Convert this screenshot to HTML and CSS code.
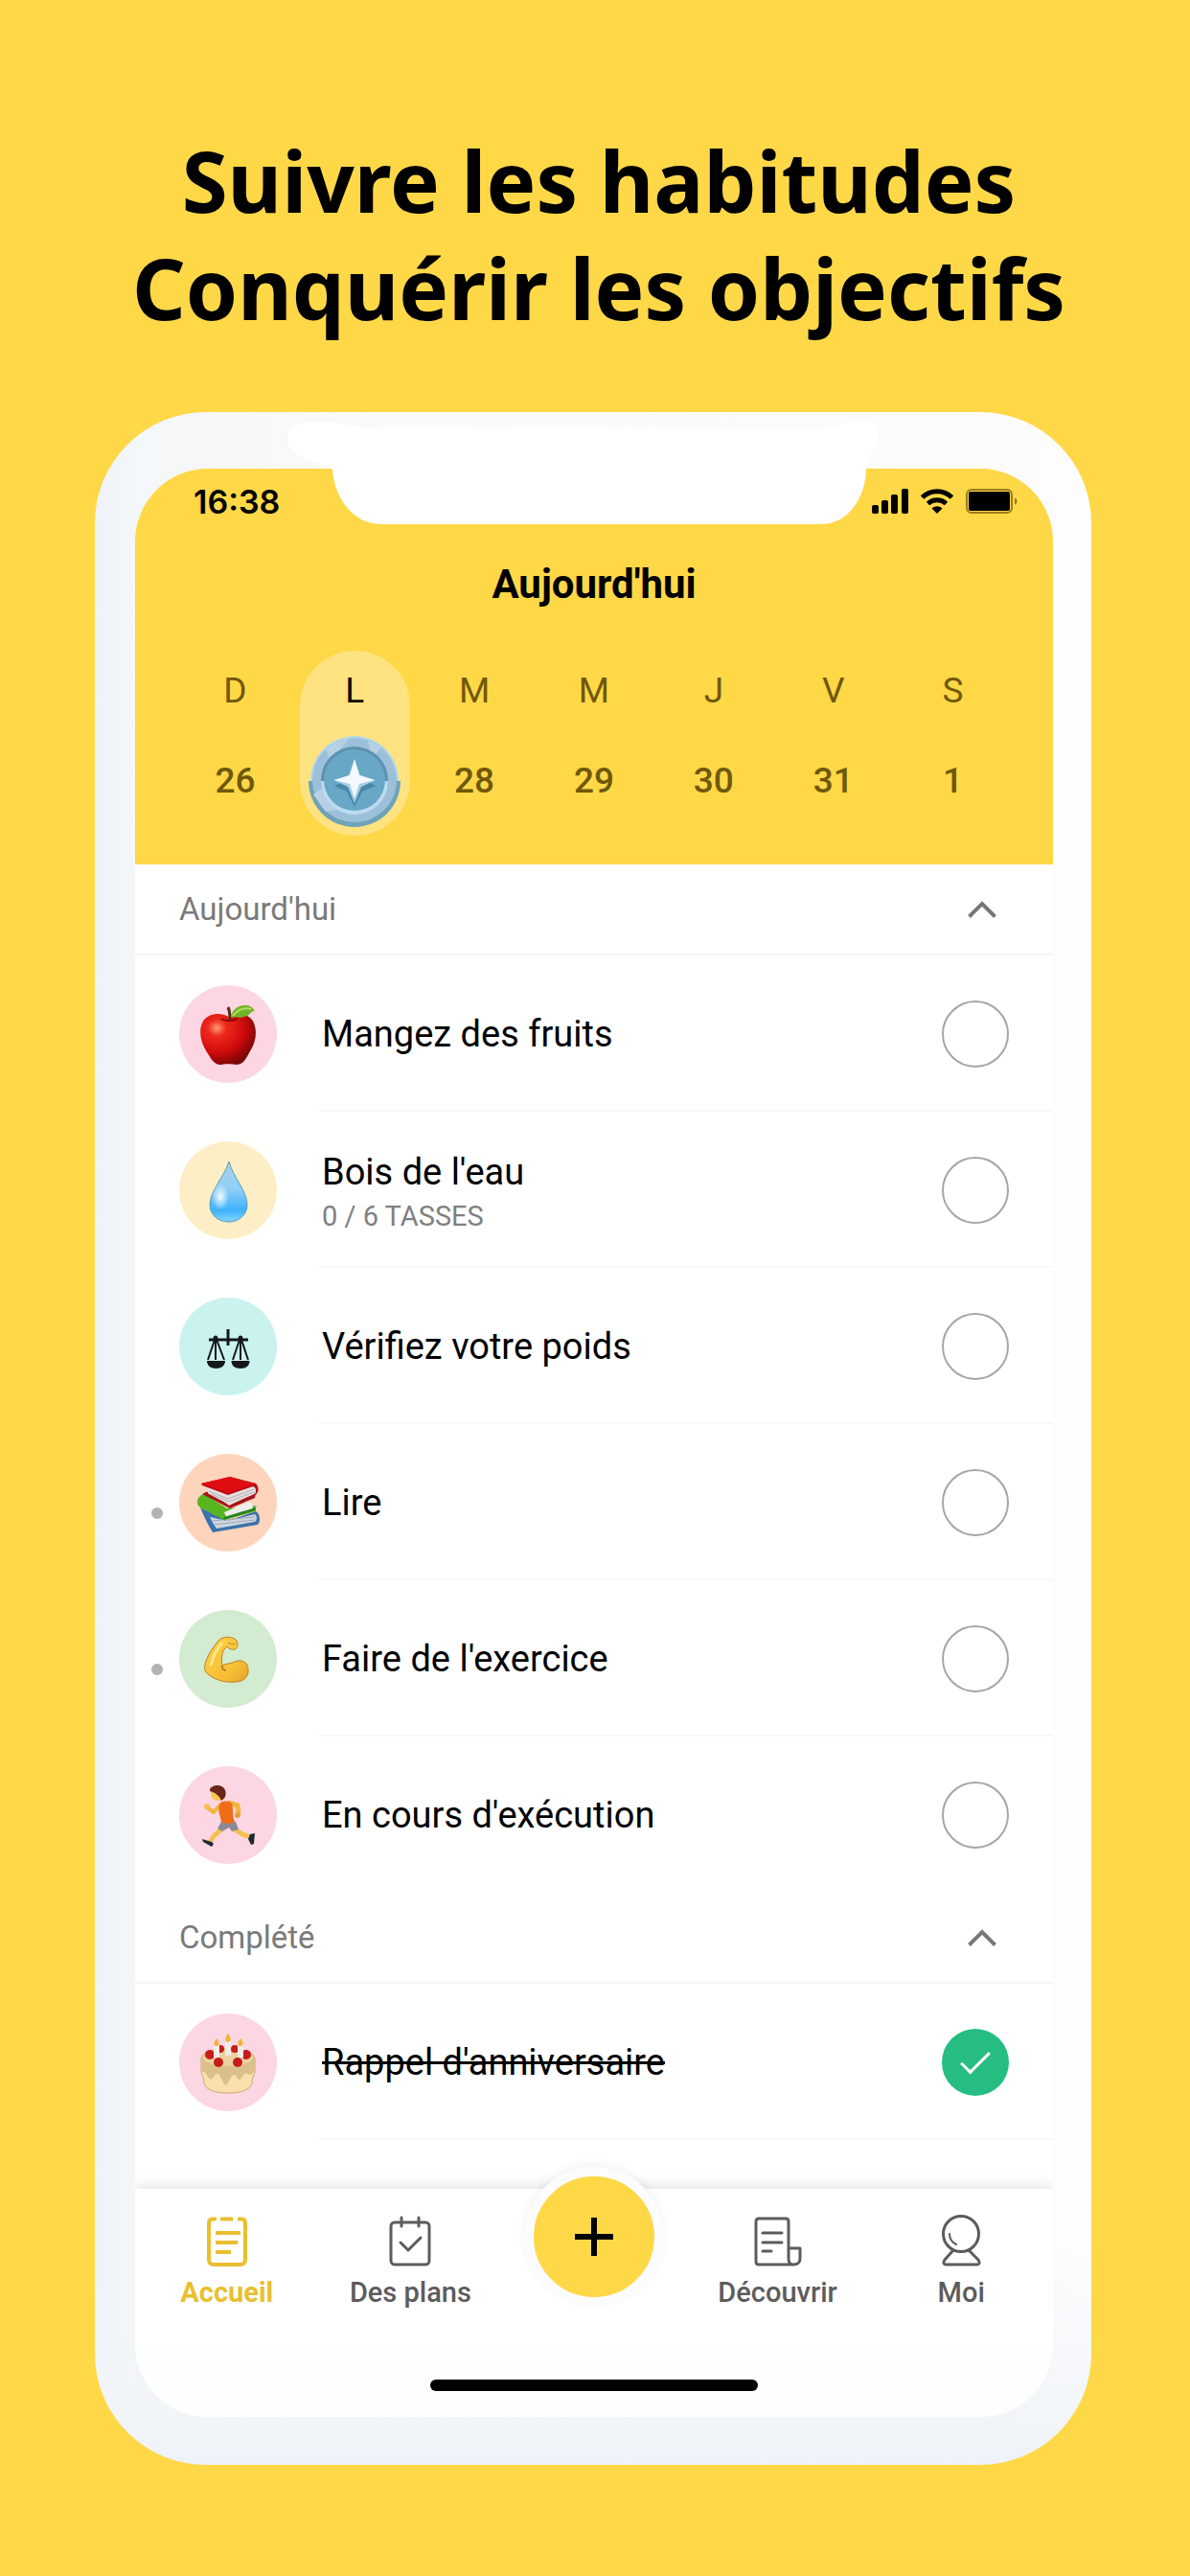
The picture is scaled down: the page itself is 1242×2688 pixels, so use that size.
FILE: index.html
```html
<!DOCTYPE html>
<html lang="fr">
<head>
    <meta charset="UTF-8">
    <meta name="viewport" content="width=device-width, initial-scale=1.0">
    <title>Suivre les habitudes</title>
    <link rel="stylesheet" href="styles.css">
</head>
<body>
    <h1>Suivre les habitudes<br>Conquérir les objectifs</h1>

    <div class="phone">
        <svg class="notch" viewBox="0 0 620 110" aria-hidden="true">
            <path d="M3 22C1 8 14 2 32 2C52 1 70 8 92 8H560C578 7 590 2 604 1C617 1 622 9 619 20C615 34 607 40 607 52C606 82 588 109 560 109H101C72 109 52 82 50 52C36 42 4 42 3 22Z" fill="#fff"/>
        </svg>

        <div class="screen">
            <header class="top">
                <div class="status">
                    <span class="time">16:38</span>
                    <div class="status-icons">
                        <svg width="38" height="26" viewBox="0 0 38 26">
                            <rect x="0" y="17" width="7" height="9" rx="2"/>
                            <rect x="10" y="12" width="7" height="14" rx="2"/>
                            <rect x="20" y="6" width="7" height="20" rx="2"/>
                            <rect x="31" y="0" width="7" height="26" rx="2"/>
                        </svg>
                        <svg width="36" height="26" viewBox="0 0 36 26">
                            <path d="M2.500 9C11 .5 25 .5 33.500 9" fill="none" stroke="#000" stroke-width="5"/>
                            <path d="M8.500 15.500C14 10.500 22 10.500 27.500 15.500" fill="none" stroke="#000" stroke-width="5"/>
                            <path d="M12.500 20.500C16 17.500 20 17.500 23.500 20.500L18 26Z"/>
                        </svg>
                        <svg width="54" height="26" viewBox="0 0 54 26">
                            <rect x="1" y="1" width="47" height="24" rx="5" fill="none" stroke="#9c7d1c" stroke-width="2"/>
                            <rect x="3" y="3" width="43" height="20" rx="2"/>
                            <path d="M51 9.500C54.500 10.500 54.500 15.500 51 16.500Z" fill="#9c7d1c"/>
                        </svg>
                    </div>
                </div>
                <h2>Aujourd'hui</h2>
                <div class="week">
                    <button class="day"><span>D</span><b>26</b></button>
                    <button class="day selected" aria-label="L 27">
                        <span>L</span>
                        <svg class="coin" viewBox="0 0 96 96">
                            <path d="M0 48A48 48 0 0 0 96 48Z" fill="#6fa3b8"/>
                            <path d="M2 48A46 47 0 0 1 94 48Z" fill="#b5d7ea"/>
                            <circle cx="48" cy="47" r="44" fill="#9dc0da"/>
                            <path d="M18 15L28 8L43 3L23 27ZM62 5L76 13L66 24ZM5 62L22 50L30 78L18 80Z" fill="#b7d1e4"/>
                            <circle cx="48" cy="47" r="35" fill="#5b92ae"/>
                            <path d="M13 48A35 35 0 0 0 83 48Z" fill="#bcdcf0"/>
                            <circle cx="48" cy="47" r="32" fill="#69a7c6"/>
                            <path d="M48 32L56 46L70 53L56 59L48 75L40 59L27 53L41 46Z" fill="#4c86a8"/>
                            <path d="M48 25L54 42L70 47L55 54L48 71L41 54L26 47L42 42Z" fill="#a9cde6"/>
                            <path d="M48 25L53 42L69 47L53 51L48 66L43 51L27 47L43 42Z" fill="#f3f9ff"/>
                        </svg>
                    </button>
                    <button class="day"><span>M</span><b>28</b></button>
                    <button class="day"><span>M</span><b>29</b></button>
                    <button class="day"><span>J</span><b>30</b></button>
                    <button class="day"><span>V</span><b>31</b></button>
                    <button class="day"><span>S</span><b>1</b></button>
                </div>
            </header>

            <main>
                <section>
                    <button class="section-title">
                        Aujourd'hui
                        <svg width="30" height="18" viewBox="0 0 30 18"><path d="M1.500 16.500L15 3L28.500 16.500"/></svg>
                    </button>
                    <ul class="habits">
                        <li class="habit">
                            <span class="icon pink">
                                <svg viewBox="0 0 102 102">
                                    <defs>
                                        <radialGradient id="apple" cx="30%" cy="28%" r="75%">
                                            <stop offset="0" stop-color="#ff9a72"/>
                                            <stop offset=".22" stop-color="#ee2a1c"/>
                                            <stop offset=".65" stop-color="#cf0a0c"/>
                                            <stop offset="1" stop-color="#7c0507"/>
                                        </radialGradient>
                                    </defs>
                                    <path d="M52 33C60 28 70 29 76 36C82 45 81 58 74 69C70 76 67 83 60 83C56 82 47 82 43 83C36 83 33 76 29 70C21 58 20 44 26 36C32 29 43 28 52 33Z" fill="url(#apple)"/>
                                    <path d="M44 35C49 38 57 38 61 34" fill="none" stroke="#8f0608" stroke-width="2"/>
                                    <path d="M51 23C53 27 53 31 53 36" fill="none" stroke="#5b2a12" stroke-width="3"/>
                                    <path d="M54 34C54 26 62 20 70 21C74 21 77 24 79 27C75 26 74 32 68 33C63 35 58 32 54 34Z" fill="#72b32b"/>
                                    <path d="M56 32C61 26 68 23 75 25" fill="none" stroke="#b4dd62" stroke-width="2"/>
                                </svg>
                            </span>
                            <label for="h1" class="name">Mangez des fruits</label>
                            <input type="checkbox" id="h1">
                        </li>
                        <li class="habit">
                            <span class="icon cream">
                                <svg viewBox="0 0 102 102">
                                    <defs>
                                        <linearGradient id="drop" x1="0" y1="0" x2="0" y2="1">
                                            <stop offset="0" stop-color="#a9cfe2"/>
                                            <stop offset=".45" stop-color="#8fd0f8"/>
                                            <stop offset=".8" stop-color="#3eb1fc"/>
                                            <stop offset="1" stop-color="#7fd6ff"/>
                                        </linearGradient>
                                        <radialGradient id="shine">
                                            <stop offset="0" stop-color="#f2faff"/>
                                            <stop offset="1" stop-color="#f2faff" stop-opacity="0"/>
                                        </radialGradient>
                                    </defs>
                                    <path d="M52 21C56 37 71 52 71 66C71 77 62 84 52 84C41 84 32 77 32 66C32 52 47 37 52 21Z" fill="url(#drop)" stroke="#5c9cba"/>
                                    <ellipse cx="43" cy="58" rx="9" ry="14" fill="url(#shine)"/>
                                </svg>
                            </span>
                            <label for="h2" class="name counted">Bois de l'eau<small>0 / 6 TASSES</small></label>
                            <input type="checkbox" id="h2">
                        </li>
                        <li class="habit">
                            <span class="icon aqua">
                                <svg viewBox="0 0 102 102" stroke="#15181a" fill="none">
                                    <path d="M51 33V50M31 44H72" stroke-width="3"/>
                                    <path d="M38 41L30 65M38 41L47 65M38 41V65M64 41L56 65M64 41L72 65M64 41V65" stroke-width="2"/>
                                    <path d="M29 66H48C48 71 44 74 38.500 74C33 74 29 71 29 66ZM54.500 66H73.500C73.500 71 70 74 64 74C58 74 54.500 71 54.500 66Z" fill="#15181a" stroke="none"/>
                                    <circle cx="38" cy="42" r="2" fill="#15181a"/>
                                    <circle cx="64" cy="42" r="2" fill="#15181a"/>
                                </svg>
                            </span>
                            <label for="h3" class="name">Vérifiez votre poids</label>
                            <input type="checkbox" id="h3">
                        </li>
                        <li class="habit dotted">
                            <span class="icon peach">
                                <svg viewBox="0 0 102 102">
                                    <path d="M22 56L50 70L80 60C85 63 85 71 82 74L35 82C30 74 26 66 22 56Z" fill="#3b72ad"/>
                                    <path d="M32 66L50 70L79 63C82 66 81 69 79 71L39 78C36 74 34 70 32 66Z" fill="#cdd5de"/>
                                    <path d="M34 70L79 66M37 74L79 69" stroke="#9fabb8" fill="none"/>
                                    <path d="M19 50C19 46 22 43 26 42L50 57L81 54L78 57L80 60L47 69L22 56C19 54 19 52 19 50Z" fill="#57b51f"/>
                                    <path d="M47 61L73 50C78 52 77 56 76 58L49 66Z" fill="#eceeed"/>
                                    <path d="M46 69L80 59V56L47 66Z" fill="#26841c"/>
                                    <path d="M24 42L32 38L52 54L80 41L79 46L53 57Z" fill="#a5131c"/>
                                    <path d="M29 35L51 42L79 33C82 36 81 40 78 42L52 53L31 42C29 40 28 37 29 35Z" fill="#e4dfe0"/>
                                    <path d="M31 39L51 47L78 37M33 42L52 50L78 40" fill="none" stroke="#b7adb0"/>
                                    <path d="M23 31L53 24L80 31C84 35 83 41 79 43C81 38 80 35 77 34L51 43L24 33Z" fill="#b90b16"/>
                                    <path d="M23 31L53 24L80 31L51 41Z" fill="#df0d12"/>
                                </svg>
                            </span>
                            <label for="h4" class="name">Lire</label>
                            <input type="checkbox" id="h4">
                        </li>
                        <li class="habit dotted">
                            <span class="icon green">
                                <svg viewBox="0 0 102 102">
                                    <defs>
                                        <linearGradient id="arm" x1="0" y1="0" x2="1" y2="1">
                                            <stop offset="0" stop-color="#ffd24a"/>
                                            <stop offset=".7" stop-color="#f7bd35"/>
                                            <stop offset="1" stop-color="#e0a02d"/>
                                        </linearGradient>
                                    </defs>
                                    <path d="M41 32C45 27 56 27 60 32C62 36 61 40 58 41C54 42 51 40 50 38L47 41C44 46 44 52 45 58C50 55 55 56 58 54C64 51 72 54 72 62C73 70 67 75 58 75C47 76 38 73 30 67C26 64 26 59 28 53C31 45 36 38 41 32Z" fill="url(#arm)" stroke="#b98220" stroke-width="1"/>
                                    <path d="M45 58C44 61 46 63 49 63" fill="none" stroke="#b98220" stroke-width="2"/>
                                    <path d="M33 58C35 49 39 41 45 34" fill="none" stroke="#ffe684" stroke-width="3"/>
                                    <path d="M51 34C54 36 57 36 59 35" fill="none" stroke="#b98220"/>
                                </svg>
                            </span>
                            <label for="h5" class="name">Faire de l'exercice</label>
                            <input type="checkbox" id="h5">
                        </li>
                        <li class="habit">
                            <span class="icon pink">
                                <svg viewBox="0 0 102 102">
                                    <path d="M43 40L36 48L29 43" fill="none" stroke="#f2b63e" stroke-width="4" stroke-linejoin="round"/>
                                    <circle cx="29" cy="42" r="3" fill="#f6c04a"/>
                                    <path d="M51 38L61 41L62 50" fill="none" stroke="#f2b63e" stroke-width="5" stroke-linejoin="round"/>
                                    <circle cx="61" cy="51" r="3" fill="#e3a235"/>
                                    <path d="M45 65L36 73L32 80" fill="none" stroke="#f5c04d" stroke-width="5"/>
                                    <path d="M57 65L66 71L75 74" fill="none" stroke="#f5c04d" stroke-width="5"/>
                                    <path d="M24 76L34 79L36 81L34 84L25 79ZM74 71L79 70L78 81L75 82L72 76Z" fill="#202a35"/>
                                    <path d="M44 58H59L62 66L55 68L52 64L45 68L40 65Z" fill="#8b8a93"/>
                                    <path d="M43 38C47 36 53 36 55 39C57 45 55 51 58 58C53 61 48 60 44 58C43 51 39 45 43 38Z" fill="#ef6d17"/>
                                    <circle cx="40" cy="29" r="7" fill="#f8c650"/>
                                    <path d="M32 24C35 18 46 19 48 25C50 31 47 34 44 36C42 31 39 28 32 26Z" fill="#6b2519"/>
                                </svg>
                            </span>
                            <label for="h6" class="name">En cours d'exécution</label>
                            <input type="checkbox" id="h6">
                        </li>
                    </ul>
                </section>

                <section>
                    <button class="section-title">
                        Complété
                        <svg width="30" height="18" viewBox="0 0 30 18"><path d="M1.500 16.500L15 3L28.500 16.500"/></svg>
                    </button>
                    <ul class="habits">
                        <li class="habit done">
                            <span class="icon pink">
                                <svg viewBox="0 0 102 102">
                                    <path d="M23 46V61C24 65 26 67 26 73C28 80 38 83 51 83C64 83 74 80 76 73C76 67 78 65 79 61V46Z" fill="#f9dfae" stroke="#cda873"/>
                                    <path d="M23 46C24 39 37 36 51 36C65 36 78 39 79 46V58C77 64 74 65 71 63C68 61 66 66 63 70C60 67 58 62 55 65C52 70 50 76 48 75C44 70 43 63 40 63C37 63 36 68 33 69C29 67 28 61 25 61C23 59 23 52 23 46Z" fill="#dcc08c"/>
                                    <ellipse cx="51" cy="46" rx="26" ry="9" fill="#e9d1a1"/>
                                    <g fill="#c91a1c">
                                        <circle cx="43" cy="37" r="4"/>
                                        <circle cx="58" cy="37" r="4"/>
                                        <circle cx="32" cy="43" r="5"/>
                                        <circle cx="70" cy="43" r="5"/>
                                        <circle cx="41" cy="51" r="5"/>
                                        <circle cx="61" cy="51" r="5"/>
                                    </g>
                                    <path d="M39 33V46M51 29V44M64 33V46" stroke="#f1ece8" stroke-width="6"/>
                                    <path d="M39 26C43 31 42 34 39 34C36 34 35 31 39 26ZM51 21C55 26 54 30 51 30C48 30 47 26 51 21ZM64 26C68 31 67 34 64 34C61 34 60 31 64 26Z" fill="#f0b43a"/>
                                </svg>
                            </span>
                            <label for="h7" class="name">Rappel d'anniversaire</label>
                            <input type="checkbox" id="h7" checked>
                        </li>
                    </ul>
                </section>
            </main>

            <nav class="tabs">
                <a href="#" class="tab active">
                    <svg viewBox="0 0 56 54">
                        <path d="M17 4.500H13C10 4.500 9 6 9 9V47C9 50 11 52 14 52H42C45 52 47 50 47 47V9C47 6 46 4.500 43 4.500H39M21 4.500H34" stroke-width="4"/>
                        <path d="M16 19H42M16 29H39M16 39H32" stroke-width="4"/>
                    </svg>
                    Accueil
                </a>
                <a href="#" class="tab">
                    <svg viewBox="0 0 56 54">
                        <rect x="8" y="8" width="40" height="44" rx="4"/>
                        <path d="M19 3V12M37 3V12M18 29L26 37L39 24"/>
                    </svg>
                    Des plans
                </a>
                <button class="add" aria-label="Ajouter">
                    <svg width="40" height="40" viewBox="0 0 40 40"><path d="M20 0V40M0 20H40"/></svg>
                </button>
                <a href="#" class="tab">
                    <svg viewBox="0 0 56 54">
                        <path d="M43 52H8C6 52 5 51 5 49V7C5 5 6 4 8 4H36C38 4 39 5 39 7V46C39 50 41 52 44 52C49 52 51 49 51 46V35H39"/>
                        <path d="M12 19H32M12 29H32M12 38H21"/>
                    </svg>
                    Découvrir
                </a>
                <a href="#" class="tab">
                    <svg viewBox="0 0 56 54">
                        <circle cx="28" cy="20" r="18.500"/>
                        <path d="M20 37L11 47C9 50 10 52 12 52H45C47 52 48 50 46 47L36 37"/>
                        <path d="M16 20C16 25 19 29 23 31" stroke-width="2"/>
                    </svg>
                    Moi
                </a>
            </nav>
            <div class="home-bar"></div>
        </div>
    </div>
</body>
</html>
```
FILE: styles.css
```css
* {
    box-sizing: border-box;
}

body {
    margin: 0;
    padding: 132px 103px 115px 99px;
    background: #ffd848;
    font-family: Roboto, "Noto Sans", sans-serif;
    color: #000;
}

button {
    border: none;
    background: none;
    font: inherit;
    color: inherit;
    padding: 0;
    cursor: pointer;
}

h1 {
    margin: 0 0 74px 12px;
    font-family: "Noto Sans", "Open Sans", sans-serif;
    font-size: 87px;
    line-height: 112px;
    font-weight: 700;
    text-align: center;
    white-space: nowrap;
}

/* phone frame */
.phone {
    position: relative;
    padding: 59px 40px 50px 42px;
    border-radius: 116px;
    background:
        linear-gradient(to top, #eff2f9, rgba(241, 245, 248, 0.9) 50px, rgba(241, 245, 248, 0) 240px),
        linear-gradient(to right, #eff3f8, #f4f7f9 42px, #fafaf9 300px, #fcfbfa 90%, #fdfdff);
}

.notch {
    position: absolute;
    top: 8px;
    left: 198px;
    width: 620px;
    height: 110px;
}

.screen {
    border-radius: 76px;
    overflow: hidden;
    background: #fff;
}

/* yellow header */
.top {
    padding-bottom: 30px;
    background: #ffd848;
}

.status {
    display: flex;
    align-items: center;
    justify-content: space-between;
    height: 68px;
    padding: 0 37px 0 61px;
}

.time {
    font-family: Inter, sans-serif;
    font-size: 34px;
    font-weight: 600;
}

.status-icons {
    display: flex;
    gap: 12px;
}

h2 {
    margin: 30px 0 46px;
    font-size: 42px;
    line-height: 46px;
    font-weight: 700;
    text-align: center;
}

.week {
    display: grid;
    grid-template-columns: repeat(7, 1fr);
    gap: 10px;
    padding: 0 47px;
}

.day {
    display: flex;
    flex-direction: column;
    align-items: center;
    gap: 25px;
    padding: 21px 0 9px;
    border-radius: 58px;
    font-size: 37px;
    line-height: 42px;
    color: #705807;
}

.day b {
    font-weight: 500;
    line-height: 96px;
}

.day.selected {
    background: #ffe380;
    color: #000;
}

.coin {
    width: 96px;
    height: 96px;
}

/* habit list */
main {
    padding-bottom: 51px;
}

.section-title {
    display: flex;
    align-items: center;
    justify-content: space-between;
    width: 100%;
    height: 95px;
    padding: 0 59px 0 46px;
    border-bottom: 2px solid #f5f5f5;
    font-size: 33px;
    color: #7a7a7a;
}

.section-title svg {
    fill: none;
    stroke: #777;
    stroke-width: 4;
}

.habits {
    margin: 0;
    padding: 0;
    list-style: none;
}

.habit {
    position: relative;
    display: flex;
    align-items: center;
    height: 163px;
    padding: 0 46px;
}

.habit::after {
    content: "";
    position: absolute;
    left: 192px;
    right: 0;
    bottom: 0;
    height: 2px;
    background: #f8f8f8;
}

.habit:last-child:not(.done)::after {
    display: none;
}

.dotted::before {
    content: "";
    position: absolute;
    left: 17px;
    top: 87px;
    width: 12px;
    height: 12px;
    border-radius: 50%;
    background: #b3b3b3;
}

.icon {
    width: 102px;
    height: 102px;
    border-radius: 50%;
}

.icon svg {
    display: block;
}

.pink {
    background: #fcd6e3;
}

.cream {
    background: #fdeec6;
}

.aqua {
    background: #caf3f0;
}

.peach {
    background: #fed5bc;
}

.green {
    background: #d3ebd0;
}

.name {
    flex: 1;
    margin-left: 47px;
    font-size: 38px;
    line-height: 44px;
}

.name small {
    display: block;
    margin-top: 6px;
    font-size: 29px;
    line-height: 36px;
    color: #808080;
}

.counted {
    padding-top: 4px;
}

.done .name {
    text-decoration: line-through;
}

input[type="checkbox"] {
    appearance: none;
    display: grid;
    place-items: center;
    width: 70px;
    height: 70px;
    margin: 0;
    border: 2px solid #a6a6a6;
    border-radius: 50%;
}

input[type="checkbox"]:checked {
    border: none;
    background: #25bd81;
}

input[type="checkbox"]:checked::after {
    content: "";
    box-sizing: border-box;
    width: 30px;
    height: 15px;
    margin-bottom: 6px;
    border-left: 3px solid #fff;
    border-bottom: 3px solid #fff;
    transform: rotate(-45deg);
}

/* bottom navigation */
.tabs {
    position: relative;
    display: grid;
    grid-template-columns: repeat(5, 1fr);
    padding: 27px 0 38px;
    background: #fff;
    box-shadow: 0 -2px 14px rgba(0, 0, 0, 0.12);
}

.tab {
    display: flex;
    flex-direction: column;
    align-items: center;
    gap: 10px;
    font-size: 29px;
    line-height: 34px;
    font-weight: 500;
    color: #5c5c5c;
    text-decoration: none;
}

.tab svg {
    width: 56px;
    height: 54px;
    fill: none;
    stroke: currentColor;
    stroke-width: 3;
    stroke-linecap: round;
    stroke-linejoin: round;
}

.tab.active {
    color: #e8bf30;
    font-weight: 700;
}

.tab.active svg {
    stroke-linecap: butt;
}

.add {
    justify-self: center;
    width: 146px;
    height: 146px;
    margin: -50px 0 -40px;
    border: 10px solid #fcfcfe;
    border-radius: 50%;
    background: #ffd848;
    box-shadow: 0 -4px 10px rgba(0, 0, 0, 0.05);
}

.add svg {
    display: block;
    margin: auto;
    stroke: #000;
    stroke-width: 6;
}

.home-bar {
    position: relative;
    padding: 36px 0 27px;
    background: #fdfefe;
}

.home-bar::before {
    content: "";
    display: block;
    width: 342px;
    height: 12px;
    margin: 0 auto;
    border-radius: 6px;
    background: #000;
}
```
